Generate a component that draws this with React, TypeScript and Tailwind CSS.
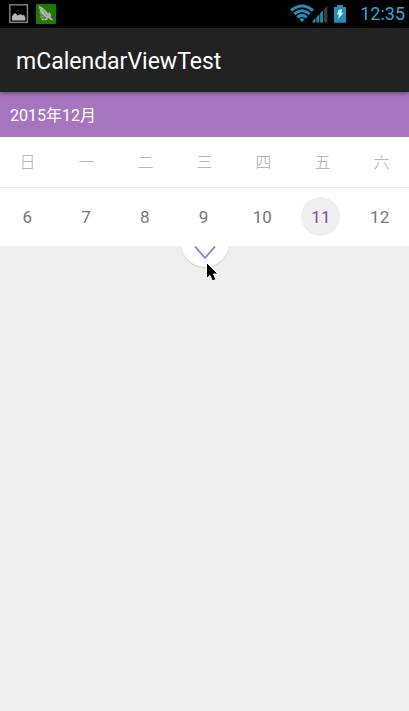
const weekdays = ["日", "一", "二", "三", "四", "五", "六"];
const days = [6, 7, 8, 9, 10, 11, 12];
const selectedDay = 11;

function StatusBar() {
  return (
    <div className="flex h-7 items-center justify-between bg-black pl-[9px] pr-1">
      <div className="flex gap-[7px]">
        <svg className="h-5 w-5" viewBox="0 0 20 20" aria-hidden="true">
          <rect x="0.8" y="0.8" width="17.6" height="17.6" fill="#000" stroke="#858585" strokeWidth="1.4" />
          <path d="M3 16.5v-4.2l2.200-2.800 1.300-.3 2.200 2.200 1.300-.4 1.800-1 1.600 1.400 1.600-.6 1.300 2.600v3.100z" fill="#b5b5b5" />
        </svg>
        <svg className="h-5 w-5" viewBox="0 0 20 20" aria-hidden="true">
          <rect width="20" height="20" rx="1" fill="#217807" />
          <path d="M2.500 1.500l4.500 2.500 4 4 2 4-1.500 1.500-3-1-4-4zM2.500 6.500l3.500 5 3.500 3-4-2zM3.500 11.500l3 3 3 .5-3 1.500z" fill="#b3bfb0" />
          <path d="M12 11l1-3.500 2 3-.5 2.500 3 3.500-3-.5-2-2-1.500 2-3 .5 1.500-2z" fill="#a7b8a2" />
          <path d="M3.500 3.500l7 8M6.500 5l5 7M5 11l5 3" stroke="#6d8d63" strokeWidth=".6" />
        </svg>
      </div>
      <div className="flex items-center">
        <svg className="h-5 w-[38px]" viewBox="0 0 38 20" aria-hidden="true">
          <g fill="none" stroke="#258db7" strokeWidth="3">
            <path d="M1 6.600Q12 -2.600 23 6.600" />
            <path d="M4.200 10Q12 3.600 19.800 10" />
            <path d="M7.300 13.300Q12 9.500 16.700 13.300" />
          </g>
          <path d="M9.300 15.200Q12 13.200 14.700 15.200L12 18.300z" fill="#258db7" />
          <path d="M22.500 18.500v-1.500l3-3v4.500zM26.300 18.500v-5.300l3-3v8.300zM30.100 18.500V9.200l3-3v12.300z" fill="#2484aa" />
          <path d="M33.900 18.500V5.400l3.500-3.700v16.800z" fill="#3c3c3c" />
        </svg>
        <svg className="ml-1.5 h-5 w-3" viewBox="0 0 12 20" aria-hidden="true">
          <path d="M3 1h6v2h3v15.700H0V3h3z" fill="#258db7" />
          <path d="M4.500 6l3.500-1-.5 3.800 2 .2L4 15l1-4.500H3z" fill="#d8f0f8" />
        </svg>
        <time className="ml-3.5 text-lg leading-7 text-[#2fa8d3]">12:35</time>
      </div>
    </div>
  );
}

export default function App() {
  return (
    <main className="min-h-screen overflow-hidden bg-[#efefef] font-['Roboto','Noto_Sans_CJK_SC',sans-serif]">
      <StatusBar />
      <header className="relative flex h-16 items-center bg-[#222] px-4 pt-1 shadow-[0_1px_4px_rgba(0,0,0,0.5)]">
        <h1 className="text-[23px] text-white">mCalendarViewTest</h1>
      </header>
      <h2 className="flex h-[45px] items-center bg-[#a775c0] px-2.5 pt-0.5 text-base text-white">2015年12月</h2>
      <section className="bg-white">
        <div className="-mx-0.5 grid h-[51px] grid-cols-7 items-center border-b border-[#ebebeb] pt-0.5 text-center text-base font-light text-[#aaa]">
          {weekdays.map((day) => (
            <span key={day}>{day}</span>
          ))}
        </div>
        <div className="-ml-0.5 grid h-[58px] grid-cols-7 items-center justify-items-center pb-0.5">
          {days.map((day) => (
            <button
              key={day}
              type="button"
              aria-pressed={day === selectedDay}
              className={
                day === selectedDay
                  ? "h-[39px] w-[39px] rounded-full bg-[#efefef] pt-[3px] text-[17px] text-[#7a5292]"
                  : "h-[39px] w-[39px] rounded-full pt-[3px] text-[17px] text-[#777]"
              }
            >
              {day}
            </button>
          ))}
        </div>
      </section>
      <div className="relative">
        <div className="flex h-6 items-start justify-center overflow-hidden">
          <button
            type="button"
            aria-label="Expand calendar"
            className="-mt-[27px] flex h-12 w-12 items-end justify-center rounded-full bg-white pb-[7px] shadow-[0_1px_1px_rgba(0,0,0,0.15)]"
          >
            <svg className="h-3.5 w-6" viewBox="0 0 24 14" fill="none" stroke="#a775c0" strokeWidth="1.8" aria-hidden="true">
              <path d="M2 .5l10 11.500L22 .5" />
            </svg>
          </button>
        </div>
        <svg className="pointer-events-none absolute left-1/2 top-4 h-5 w-4" viewBox="0 0 16 20" aria-hidden="true">
          <path d="M1.500 .5v16l3.500-3 2.500 5.500 3.500-1.500-2.500-5.500h4.500z" fill="#000" stroke="#fff" strokeWidth="1" />
        </svg>
      </div>
    </main>
  );
}
